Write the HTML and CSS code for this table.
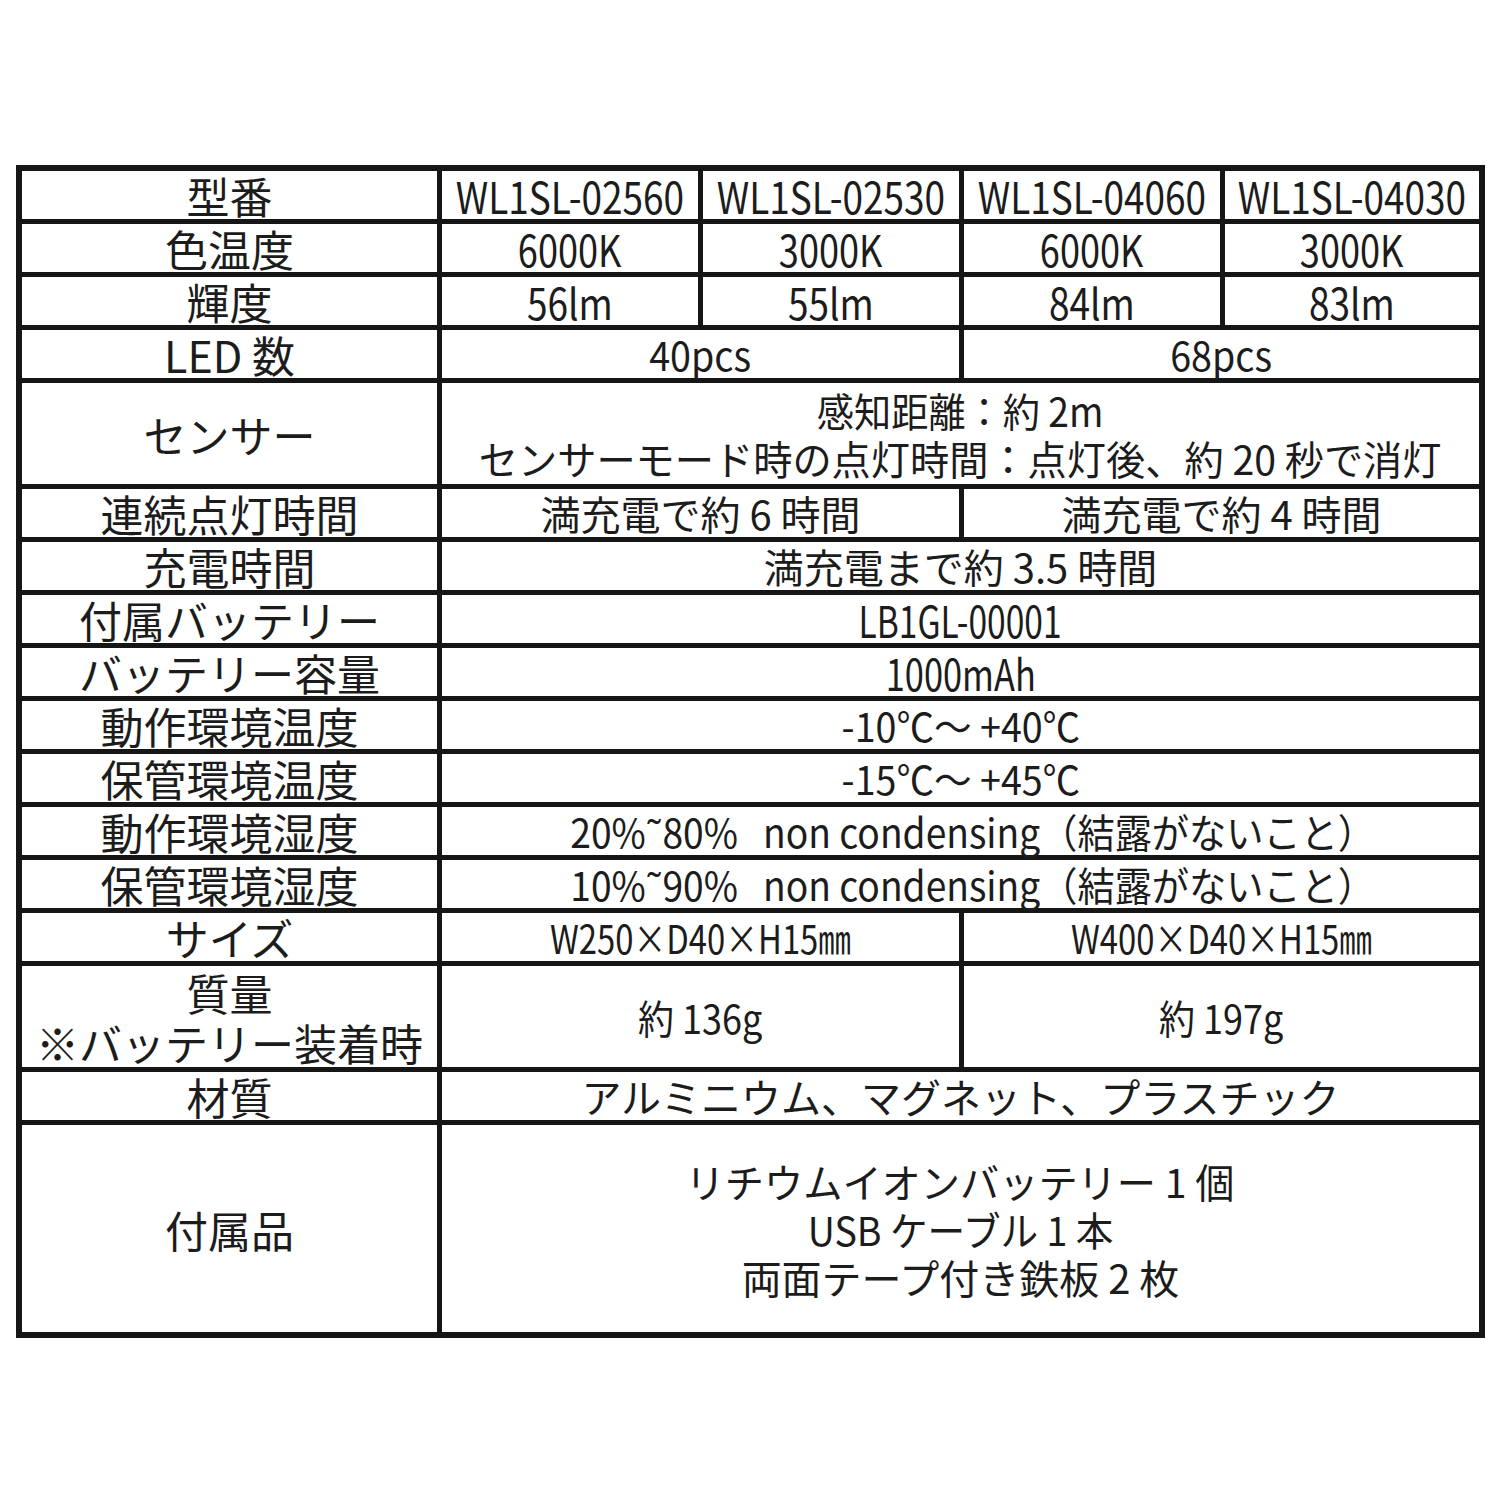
FILE: index.html
```html
<!DOCTYPE html>
<html lang="ja">
<head>
<meta charset="utf-8">
<title>仕様</title>
<link rel="stylesheet" href="styles.css">
</head>
<body>
<div class="spec">
  <div class="cell label">型番</div>
  <div class="cell val model"><span class="sx k84">WL1SL-02560</span></div>
  <div class="cell val model"><span class="sx k84">WL1SL-02530</span></div>
  <div class="cell val model"><span class="sx k84">WL1SL-04060</span></div>
  <div class="cell val model"><span class="sx k84">WL1SL-04030</span></div>

  <div class="cell label">色温度</div>
  <div class="cell val lat"><span class="sx k84">6000K</span></div>
  <div class="cell val lat"><span class="sx k84">3000K</span></div>
  <div class="cell val lat"><span class="sx k84">6000K</span></div>
  <div class="cell val lat"><span class="sx k84">3000K</span></div>

  <div class="cell label">輝度</div>
  <div class="cell val lat"><span class="sx k86">56lm</span></div>
  <div class="cell val lat"><span class="sx k86">55lm</span></div>
  <div class="cell val lat"><span class="sx k86">84lm</span></div>
  <div class="cell val lat"><span class="sx k86">83lm</span></div>

  <div class="cell label">LED 数</div>
  <div class="cell val half"><span class="sx k94">40pcs</span></div>
  <div class="cell val half"><span class="sx k94">68pcs</span></div>

  <div class="cell label">センサー</div>
  <div class="cell val full stack">
    <span class="line"><span class="sx k93">感知距離：約 2m</span></span>
    <span class="line"><span class="sx k98">センサーモード時の点灯時間：点灯後、約 20 秒で消灯</span></span>
  </div>

  <div class="cell label">連続点灯時間</div>
  <div class="cell val half">満充電で約 6 時間</div>
  <div class="cell val half">満充電で約 4 時間</div>

  <div class="cell label">充電時間</div>
  <div class="cell val full">満充電まで約 3.5 時間</div>

  <div class="cell label">付属バッテリー</div>
  <div class="cell val full lat"><span class="sx k78">LB1GL-00001</span></div>

  <div class="cell label">バッテリー容量</div>
  <div class="cell val full lat"><span class="sx k80">1000mAh</span></div>

  <div class="cell label">動作環境温度</div>
  <div class="cell val full"><span class="sx k94">-10℃～ +40℃</span></div>

  <div class="cell label">保管環境温度</div>
  <div class="cell val full"><span class="sx k94">-15℃～ +45℃</span></div>

  <div class="cell label">動作環境湿度</div>
  <div class="cell val full"><span class="sx k93 tail">20%˜80%&nbsp;&nbsp; non condensing（結露がないこと）</span></div>

  <div class="cell label">保管環境湿度</div>
  <div class="cell val full"><span class="sx k93 tail">10%˜90%&nbsp;&nbsp; non condensing（結露がないこと）</span></div>

  <div class="cell label">サイズ</div>
  <div class="cell val half"><span class="sx k82">W250×D40×H15㎜</span></div>
  <div class="cell val half"><span class="sx k82">W400×D40×H15㎜</span></div>

  <div class="cell label stack">
    <span class="line">質量</span>
    <span class="line">※バッテリー装着時</span>
  </div>
  <div class="cell val half"><span class="sx k90">約 136g</span></div>
  <div class="cell val half"><span class="sx k90">約 197g</span></div>

  <div class="cell label">材質</div>
  <div class="cell val full">アルミニウム、マグネット、プラスチック</div>

  <div class="cell label">付属品</div>
  <div class="cell val full stack">
    <span class="line"><span class="sx k98">リチウムイオンバッテリー 1 個</span></span>
    <span class="line"><span class="sx k94">USB ケーブル 1 本</span></span>
    <span class="line">両面テープ付き鉄板 2 枚</span>
  </div>
</div>
</body>
</html>
```

FILE: styles.css
```css
html, body {
  margin: 0;
  padding: 0;
  background: #ffffff;
}

body {
  font-family: "Noto Sans CJK JP", "Noto Sans", sans-serif;
  color: #1c1c1c;
}

.spec {
  display: grid;
  grid-template-columns: 415px 256px 256px 256px 254px;
  grid-template-rows: 48px 48px 48px 48px 101px 48px 48px 48px 48px 48px 48px 48px 48px 48px 101px 48px 207px;
  gap: 5px;
  padding: 6px;
  background: #161616;
  width: fit-content;
  margin: 165px 0 0 16px;
}

.cell {
  background: #ffffff;
  display: flex;
  align-items: center;
  justify-content: center;
  text-align: center;
  white-space: nowrap;
}

.label {
  font-size: 43px;
  line-height: 46px;
}

.val {
  font-size: 40px;
  line-height: 46px;
}

.model {
  font-size: 44px;
}

.lat {
  font-size: 43px;
}

.half {
  grid-column: span 2;
}

.full {
  grid-column: span 4;
}

.stack {
  flex-direction: column;
}

.line {
  display: block;
  line-height: 48px;
}

.label .line {
  line-height: 50px;
}

.sx {
  display: inline-block;
  transform-origin: 50% 50%;
}

.tail {
  margin-right: -24px;
}

.k78 { transform: scaleX(0.78); }
.k80 { transform: scaleX(0.80); }
.k82 { transform: scaleX(0.82); }
.k84 { transform: scaleX(0.84); }
.k86 { transform: scaleX(0.86); }
.k90 { transform: scaleX(0.90); }
.k93 { transform: scaleX(0.93); }
.k94 { transform: scaleX(0.94); }
.k98 { transform: scaleX(0.98); }
```
